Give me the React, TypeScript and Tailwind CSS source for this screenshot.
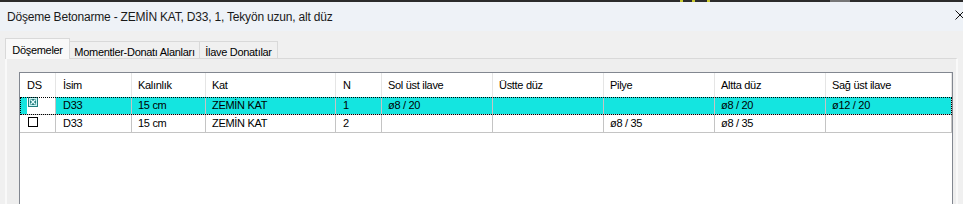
const cols = [
  { key: 'ds', title: 'DS', w: 'w-[36px]', pl: 'pl-[7px]' },
  { key: 'isim', title: 'İsim', w: 'w-[76px]', pl: 'pl-[7px]' },
  { key: 'kal', title: 'Kalınlık', w: 'w-[74px]', pl: 'pl-[6px]' },
  { key: 'kat', title: 'Kat', w: 'w-[130px]', pl: 'pl-[6px]' },
  { key: 'n', title: 'N', w: 'w-[46px]', pl: 'pl-[7px]' },
  { key: 'sol', title: 'Sol üst ilave', w: 'w-[111px]', pl: 'pl-[6px]' },
  { key: 'ustte', title: 'Üstte düz', w: 'w-[111px]', pl: 'pl-[6px]' },
  { key: 'pilye', title: 'Pilye', w: 'w-[111px]', pl: 'pl-[6px]' },
  { key: 'altta', title: 'Altta düz', w: 'w-[111px]', pl: 'pl-[6px]' },
  { key: 'sag', title: 'Sağ üst ilave', w: 'flex-1', pl: 'pl-[6px]' },
]

const rows = [
  { checked: true, cells: ['D33', '15 cm', 'ZEMİN KAT', '1', 'ø8 / 20', '', '', 'ø8 / 20', 'ø12 / 20'] },
  { checked: false, cells: ['D33', '15 cm', 'ZEMİN KAT', '2', '', '', 'ø8 / 35', 'ø8 / 35', ''] },
]

function CheckBox({ checked }: { checked: boolean }) {
  if (!checked) {
    return <div className="w-[10px] h-[10px] border border-black bg-white" />
  }
  return (
    <svg width="10" height="10" viewBox="0 0 10 10">
      <rect x="0" y="0" width="10" height="10" fill="#237d7d" />
      <rect x="1.5" y="1.5" width="7" height="7" fill="none" stroke="#c8f4f4" strokeWidth="1" />
      <path d="M2.5 2.5 L7.5 7.5 M7.5 2.5 L2.5 7.5" stroke="#e8ffff" strokeWidth="1.2" />
    </svg>
  )
}

export default function App() {
  const ui = "font-['Liberation_Sans',Arial,sans-serif]"
  return (
    <div className={`w-[963px] h-[204px] overflow-hidden bg-[#f0f0f0] flex flex-col ${ui}`}>
      {/* strip from the window behind */}
      <div className="h-[2px] bg-[#2b2b2b] flex shrink-0">
        <div className="w-[680px]" />
        <div className="w-[3px] bg-[#c8c830]" />
        <div className="w-[9px]" />
        <div className="w-[3px] bg-[#c8c830]" />
        <div className="w-[12px]" />
        <div className="w-[3px] bg-[#c8c830]" />
        <div className="w-[120px]" />
        <div className="w-[20px] bg-[#777]" />
      </div>

      {/* title bar */}
      <div className="h-[29px] bg-[#eef2f7] flex items-center pl-[7px] shrink-0">
        <span className="text-[12px] tracking-[-0.2px] text-[#1a1a1a] whitespace-nowrap">
          Döşeme Betonarme - ZEMİN KAT, D33, 1, Tekyön uzun, alt düz
        </span>
        <svg className="ml-auto -mr-[2px] mb-[3px]" width="10" height="10" viewBox="0 0 10 10">
          <path d="M0.5 0.5 L9.5 9.5 M9.5 0.5 L0.5 9.5" stroke="#111" strokeWidth="1" />
        </svg>
      </div>

      <div className="pt-[7px] pl-[5px] flex flex-col flex-1 text-[11px] tracking-[-0.3px] text-black">
        {/* tabs */}
        <div className="flex items-end h-[20px]">
          <div className="w-[65px] h-[21px] -mb-[1px] relative z-10 bg-[#f9f9f9] border border-b-0 border-[#d9d9d9] flex justify-center pt-[3px]">
            Döşemeler
          </div>
          <div className="w-[130px] h-[17px] bg-[#f0f0f0] border-t border-r border-[#d9d9d9] flex justify-center pt-[2px]">
            Momentler-Donatı Alanları
          </div>
          <div className="w-[78px] h-[17px] bg-[#f0f0f0] border-t border-r border-[#d9d9d9] flex justify-center pt-[2px]">
            İlave Donatılar
          </div>
        </div>

        {/* tab page */}
        <div className="w-[953px] flex-1 border-t border-t-[#d9d9d9] border-l-2 border-l-[#f9f9f9] border-r-2 border-r-[#f9f9f9] bg-[#eeeeee] pl-[12px] pt-[13px]">
          <div className="w-[934px] h-[160px] border border-[#828790] bg-white">
            {/* header */}
            <div className="flex h-[24px]">
              {cols.map((c) => (
                <div key={c.key} className={`${c.w} ${c.pl} shrink-0 flex items-center border-r border-[#e5e5e5]`}>
                  {c.title}
                </div>
              ))}
            </div>

            {rows.map((r, i) => (
              <div
                key={i}
                className={`flex h-[18px] ${
                  r.checked ? 'bg-[#14e5e0] outline outline-1 outline-dotted outline-black -outline-offset-1' : 'bg-white'
                }`}
              >
                <div className="w-[36px] shrink-0 flex border-r border-b border-[#c4c4c4]">
                  <div className={`w-[7px] ${r.checked ? 'bg-[#14e5e0]' : 'bg-white'}`} />
                  <div className={`flex-1 bg-white pl-[1px] ${r.checked ? 'pt-[0px]' : 'pt-[2px]'}`}>
                    <CheckBox checked={r.checked} />
                  </div>
                </div>
                {r.cells.map((v, j) => {
                  const c = cols[j + 1]
                  return (
                    <div
                      key={c.key}
                      className={`${c.w} ${c.pl} shrink-0 flex items-center border-r border-b border-[#c4c4c4] whitespace-nowrap`}
                    >
                      {v}
                    </div>
                  )
                })}
              </div>
            ))}
          </div>
        </div>
      </div>
    </div>
  )
}
